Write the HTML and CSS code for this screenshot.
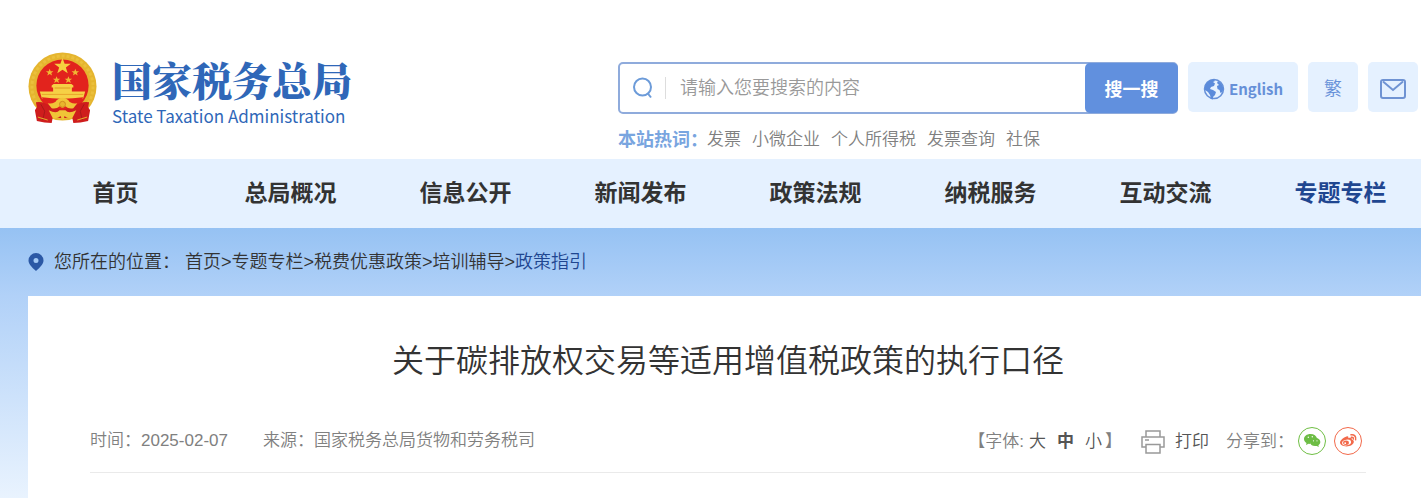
FILE: index.html
```html
<!DOCTYPE html>
<html lang="zh-CN">
<head>
  <meta charset="UTF-8" />
  <meta name="viewport" content="width=device-width, initial-scale=1.0"/>
  <title>关于碳排放权交易等适用增值税政策的执行口径</title>
  <link rel="stylesheet" href="styles.css">
</head>
<body>

<header class="header">
  <a class="logo" href="#">
    <svg class="emblem" viewBox="0 0 70 74" aria-hidden="true">
      <circle cx="35" cy="35" r="34.500" fill="#e5b52f"/>
      <circle cx="35" cy="35" r="31" fill="none" stroke="#ebc03c" stroke-width="3" stroke-dasharray="3 2"/>
      <circle cx="35" cy="34" r="26.500" fill="#e2231d"/>
      <path fill="#f6cf3f" d="M35 6l2.200 5.800h6.200l-5 3.800 1.900 6-5.300-3.600-5.300 3.600 1.900-6-5-3.800h6.200z"/>
      <path id="star" fill="#f0b833" d="M22 17l1 2.500h2.800l-2.200 1.700.8 2.700-2.400-1.600-2.400 1.600.8-2.700-2.200-1.700H21z"/>
      <use href="#star" x="26"/>
      <use href="#star" x="7" y="7.500"/>
      <use href="#star" x="19" y="7.500"/>
      <path fill="#f6d045" d="M24 34l2-1.500h18l2 1.500v2h-1.500v4H58l-2 7 -5 3H19l-5-3-2-7h13.500v-4H24z"/>
      <path d="M14 43h42" stroke="#e9a52b" stroke-width="1"/>
      <path d="M27 36.500h16" stroke="#e09a22" stroke-width="1"/>
      <path fill="#e2231d" d="M14 46q21 3 42 0l-4 8H18z"/>
      <path fill="#cf1d1d" d="M8 51q5-1 9 1l18 7 18-7q4-2 9-1l-1 5 2 3-2 11q-8 2-15 2l-1-5H25l-1 5q-7 0-15-2L7 59l2-3z"/>
      <path fill="none" stroke="#a81818" stroke-width="1" d="M13 53l4 7-2 9M57 53l-4 7 2 9"/>
      <path fill="#f0c437" d="M20 52q7 1 9-3 6-5 12 0 2 4 9 3l-4 5q-5 1-8-2-3 3-6 0-3 3-8 2z"/>
      <circle cx="35" cy="53" r="3" fill="#e9b52d" stroke="#d28b20" stroke-width="1"/>
      <path fill="#f0c437" d="M21 59q8 4 11 0h6q3 4 11 0l-4 8q-5 1-8-2-1 8-4 0-3 3-8 2z"/>
      <path fill="none" stroke="#e3b32c" stroke-width="1" d="M10 66l10 3M60 66l-10 3"/>
    </svg>
    <span class="logo-text">
      <span class="logo-cn">国家税务总局</span>
      <span class="logo-en">State Taxation Administration</span>
    </span>
  </a>

  <div class="tools">
    <div class="search-col">
      <form class="search">
        <label class="search-icon" for="keyword" aria-label="搜索">
          <svg width="22" height="22" viewBox="0 0 22 22" fill="none" stroke="#6c9bd9" stroke-width="2" aria-hidden="true">
            <circle cx="10.500" cy="10" r="8.500"/>
            <path d="M15.500 16l3.500 4.500"/>
          </svg>
        </label>
        <input type="text" id="keyword" placeholder="请输入您要搜索的内容">
        <button type="submit">搜一搜</button>
      </form>
      <div class="hot">
        <strong>本站热词：</strong>
        <a href="#">发票</a>
        <a href="#">小微企业</a>
        <a href="#">个人所得税</a>
        <a href="#">发票查询</a>
        <a href="#">社保</a>
      </div>
    </div>
    <a class="tool tool-en" href="#">
      <svg width="22" height="22" viewBox="0 0 22 22" aria-hidden="true">
        <circle cx="11" cy="11" r="9.500" fill="#e6f2ff" stroke="#6690d8" stroke-width="1.500"/>
        <path fill="#5b8bdb" d="M2 8Q4 2 11 1.500l1 1.500-2 1 2 1.500-1 2.500-3 1-1 2 3 1 3 2-1 3-2 2v2.500l-2-.5-1-4-2-3-3-2zM15 3q4 2 5.500 7l-1 4-2 1-1-3-2-1-.5-3 2-1-2-2z"/>
      </svg>
      English
    </a>
    <a class="tool tool-square" href="#">繁</a>
    <a class="tool tool-square" href="#" aria-label="邮箱">
      <svg class="mail" width="26" height="20" viewBox="0 0 26 20" fill="none" stroke="#6f93d3" stroke-width="2" aria-hidden="true">
        <rect x="1" y="1" width="24" height="18" rx="2"/>
        <path d="M3 2.500l10 8.500 10-8.500"/>
      </svg>
    </a>
  </div>
</header>

<nav class="nav">
  <a href="#">首页</a>
  <a href="#">总局概况</a>
  <a href="#">信息公开</a>
  <a href="#">新闻发布</a>
  <a href="#">政策法规</a>
  <a href="#">纳税服务</a>
  <a href="#">互动交流</a>
  <a href="#" class="active">专题专栏</a>
</nav>

<main class="main">
  <!-- Breadcrumb -->
  <div class="crumbs">
    <svg width="16" height="18" viewBox="0 0 16 18" aria-hidden="true">
      <path fill="#2b58a5" fill-rule="evenodd" d="M8 0a7.500 7.500 0 0 1 7.500 7.500c0 3.500-3 6.500-7.500 10.500C3.500 14 .5 11 .5 7.500A7.500 7.500 0 0 1 8 0zm0 5a2.500 2.500 0 1 0 0 5 2.500 2.500 0 0 0 0-5z"/>
    </svg>
    <span class="crumbs-label">您所在的位置：</span>
    <span><a href="#">首页</a>&gt;<a href="#">专题专栏</a>&gt;<a href="#">税费优惠政策</a>&gt;<a href="#">培训辅导</a>&gt;<a href="#" class="current">政策指引</a></span>
  </div>

  <article class="article">
    <h1>关于碳排放权交易等适用增值税政策的执行口径</h1>
    <div class="meta">
      <div class="meta-left">
        <span>时间：2025-02-07</span>
        <span>来源：国家税务总局货物和劳务税司</span>
      </div>
      <div class="meta-right">
        <div class="font-size">
          <span>【字体:</span>
          <button type="button">大</button>
          <button type="button" class="on">中</button>
          <button type="button">小</button>
          <span>】</span>
        </div>
        <button type="button" class="print">
          <svg width="24" height="24" viewBox="0 0 24 24" fill="none" stroke="#999" stroke-width="1.500" aria-hidden="true">
            <path d="M5 7V1h14v6M5 17H1V7h22v10h-4M5 14.500h14V23H5zM4 10h4"/>
          </svg>
          打印
        </button>
        <span class="share-label">分享到：</span>
        <a class="share" href="#" aria-label="微信">
          <svg width="28" height="28" viewBox="0 0 28 28" aria-hidden="true">
            <circle cx="14" cy="14" r="13.500" fill="#fff" stroke="#6fbe44"/>
            <path fill="#6dbd45" d="M12.500 7c3.600 0 6 2 6.500 4.500-4 0-6.500 2-6.500 5v.5l-2-.2L8 18l.5-2C7 15 6 13.600 6 12c0-2.800 2.800-5 6.500-5z"/>
            <path fill="#6dbd45" d="M17 10.800c3 0 5.300 1.800 5.300 4.200 0 1.300-.7 2.500-1.900 3.200l.4 1.700-2-1c-3.900.8-6.800-1.200-6.800-3.900 0-2.400 2.200-4.200 5-4.200z"/>
            <g fill="#fff"><circle cx="10.300" cy="10.300" r=".7"/><circle cx="14.300" cy="9.800" r=".7"/><circle cx="15.500" cy="13.800" r=".6"/><circle cx="19" cy="13.800" r=".6"/></g>
          </svg>
        </a>
        <a class="share" href="#" aria-label="微博">
          <svg width="28" height="28" viewBox="0 0 28 28" aria-hidden="true">
            <circle cx="14" cy="14" r="13.500" fill="#fff" stroke="#f2694a"/>
            <path fill="#f2694a" d="M12.500 9.500c1.500-.6 2.300.2 1.800 1.700 2-.8 4-.6 3.500 1.300 1.600.5 2.200 1.300 2 2.600-.4 2.500-3.600 4.400-7.300 4.400S6 17.900 6 15.600c0-2.200 3.500-5.300 6.500-6.100z"/>
            <ellipse cx="12.600" cy="15.500" rx="4.500" ry="2.800" fill="#fff" transform="rotate(-8 12.600 15.500)"/>
            <ellipse cx="12" cy="15.800" rx="2.900" ry="2.200" fill="#f2694a"/>
            <circle cx="11.200" cy="16.200" r=".9" fill="#fff"/>
            <path fill="none" stroke="#f2694a" stroke-width="1.500" stroke-linecap="round" d="M17 7.800c3.200-.6 5.500 1.800 4.600 5M17.400 10.200c1.400-.2 2.200.7 1.900 1.900"/>
          </svg>
        </a>
      </div>
    </div>
  </article>
</main>

</body>
</html>
```
FILE: styles.css
```css
:root {
  --blue:#6190de; --pale:#e5f1ff; --navy:#1f4690; --text:#333; --muted:#808080;
  --radius:5px;
}
*{box-sizing:border-box}
body{margin:0;background:#fff;color:var(--text);overflow-x:hidden;
     font-family:"Liberation Sans","Noto Sans CJK SC",sans-serif;font-weight:350}
a{color:inherit;text-decoration:none}
button{border:none;background:none;padding:0;font:inherit;color:inherit;cursor:pointer}
svg{display:block;flex:none}

.header{display:flex;justify-content:space-between;align-items:flex-start;padding:52px 3px 6px 28px}
.logo{display:flex;gap:15px;color:#2f67b8}
.emblem{width:69px;height:73px}
.logo-text{display:flex;flex-direction:column;padding-top:1px}
.logo-cn{font-family:"Noto Serif CJK SC","Noto Sans CJK SC",serif;font-weight:900;font-size:40px;line-height:52px}
.logo-en{font-family:"Noto Sans CJK SC",sans-serif;font-weight:400;font-size:17px;line-height:22px;white-space:nowrap}

.tools{display:flex;gap:10px;padding-top:10px}
.search-col{width:560px}
.search{display:flex;height:52px;border:2px solid #8fabdc;border-radius:var(--radius)}
.search-icon{display:flex;align-items:center;padding-left:12px}
.search-icon::after{content:"";width:1px;height:22px;margin-left:11px;background:#ddd}
.search input{flex:1;min-width:0;border:none;outline:none;background:none;padding:0 14px;font:inherit;font-size:18px}
.search input::placeholder{color:#999}
.search button{width:93px;margin:-1px -2px -1px 0;background:var(--blue);color:#fff;border-radius:var(--radius);
               font-size:18px;font-weight:700}
.hot{display:flex;gap:11px;align-items:center;margin-top:13px;font-size:17px;line-height:26px;color:var(--muted)}
.hot strong{margin-right:-12px;font-size:18px;font-weight:700;color:#79a5df}
.tool{display:flex;align-items:center;justify-content:center;height:50px;background:var(--pale);
      border-radius:var(--radius);color:#6690d8;font-size:18px}
.tool-en{width:110px;padding-top:3px;gap:4px;font-family:"Noto Sans CJK SC",sans-serif;font-size:15px;font-weight:700}
.tool-square{width:50px}
.mail{margin-top:4px}

.nav{display:flex;padding-left:28px;background:var(--pale)}
.nav a{flex:0 0 175px;text-align:center;font-size:23px;line-height:69px;font-weight:700}
.nav .active{color:var(--navy)}

.main{padding-left:28px;background:linear-gradient(#96c2f3,#b1d1f8 68px,#e9f3fe 270px)}
.crumbs{display:flex;align-items:center;height:68px;font-size:18px;line-height:24px}
.crumbs-label{margin:0 5px 0 10px}
.crumbs .current{color:var(--navy)}

.article{background:#fff;padding:41px 55px 26px 62px}
.article h1{margin:0;text-align:center;font-size:32px;line-height:48px;font-weight:350}
.meta{display:flex;justify-content:space-between;align-items:center;margin-top:39px;padding-bottom:14px;
      border-bottom:1px solid #eaeaea;font-size:17px;line-height:28px;color:var(--muted)}
.meta-left{display:flex;gap:35px}
.meta-right{display:flex;align-items:center;padding-right:4px;line-height:32px}
.font-size{display:flex;gap:11px;padding-top:2px}
.font-size span:first-child{margin-right:-6px}
.font-size span:last-child{margin-left:-8px}
.font-size button,.print{color:#555}
.font-size .on{font-weight:700}
.print,.share-label{padding-top:2px}
.print{display:flex;align-items:center;gap:10px;margin:0 17px 0 19px}
.share-label{margin-right:4px}
.share + .share{margin-left:8px}
```
